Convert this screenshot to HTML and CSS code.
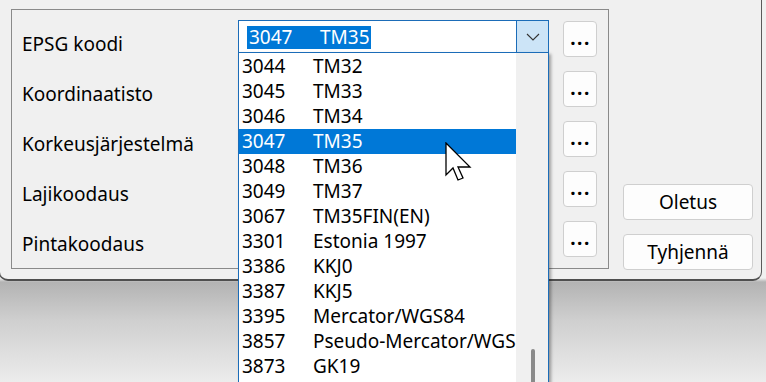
FILE: index.html
```html
<!DOCTYPE html>
<html>
<head>
<meta charset="utf-8">
<link rel="stylesheet" href="styles.css">
</head>
<body>
<div class="screen">
  <div class="window">
    <div class="group">
      <div class="row">
        <span class="label">EPSG koodi</span>
        <div class="combo open">
          <span class="value"><span class="sel"><span class="num">3047</span>TM35</span></span>
          <span class="arrow"><svg width="14" height="8" viewBox="0 0 14 8"><path d="M1 1 L7 7 L13 1" fill="none" stroke="#333" stroke-width="1.1"/></svg></span>
        </div>
        <button class="more">...</button>
      </div>
      <div class="row">
        <span class="label">Koordinaatisto</span>
        <div class="combo"></div>
        <button class="more">...</button>
      </div>
      <div class="row">
        <span class="label">Korkeusjärjestelmä</span>
        <div class="combo"></div>
        <button class="more">...</button>
      </div>
      <div class="row">
        <span class="label">Lajikoodaus</span>
        <div class="combo"></div>
        <button class="more">...</button>
      </div>
      <div class="row">
        <span class="label">Pintakoodaus</span>
        <div class="combo"></div>
        <button class="more">...</button>
      </div>
    </div>
    <div class="side">
      <button class="wide">Oletus</button>
      <button class="wide">Tyhjennä</button>
    </div>
  </div>

  <div class="dropdown">
    <ul class="items">
      <li><span class="code">3044</span><span class="name">TM32</span></li>
      <li><span class="code">3045</span><span class="name">TM33</span></li>
      <li><span class="code">3046</span><span class="name">TM34</span></li>
      <li class="active"><span class="code">3047</span><span class="name">TM35</span></li>
      <li><span class="code">3048</span><span class="name">TM36</span></li>
      <li><span class="code">3049</span><span class="name">TM37</span></li>
      <li><span class="code">3067</span><span class="name">TM35FIN(EN)</span></li>
      <li><span class="code">3301</span><span class="name">Estonia 1997</span></li>
      <li><span class="code">3386</span><span class="name">KKJ0</span></li>
      <li><span class="code">3387</span><span class="name">KKJ5</span></li>
      <li><span class="code">3395</span><span class="name">Mercator/WGS84</span></li>
      <li><span class="code">3857</span><span class="name">Pseudo-Mercator/WGS84</span></li>
      <li><span class="code">3873</span><span class="name">GK19</span></li>
    </ul>
    <div class="scrollbar"><div class="thumb"></div></div>
  </div>

  <svg class="cursor" width="27" height="40" viewBox="0 0 27 40">
    <path d="M1 1 L1 33 L8 26 L13 38 L18 36 L13 25 L25 25 Z" fill="#fff" stroke="#000" stroke-width="1.3" stroke-linejoin="miter"/>
  </svg>
</div>
</body>
</html>
```
FILE: styles.css
```css
* { box-sizing: border-box; }
html, body { margin: 0; padding: 0; }
body {
  width: 766px;
  height: 382px;
  overflow: hidden;
  font-family: "Noto Sans", "Open Sans", sans-serif;
  font-size: 19px;
  color: #000;
  background: linear-gradient(to bottom, #f0f0f0 0px, #f0f0f0 278px, #b3b3b3 282px, #cfcfcf 320px, #ececec 382px);
}
.screen {
  position: relative;
  width: 766px;
  height: 382px;
  overflow: hidden;
}
.window {
  display: flex;
  width: 763px;
  height: 281px;
  margin-left: -1px;
  padding: 9px 0 0 11px;
  background: #f0f0f0;
  border: 1px solid #5a5a5a;
  border-top: none;
  border-bottom: 2px solid #4f4f4f;
  border-radius: 0 0 9px 9px;
}
.group {
  width: 598px;
  height: 260px;
  border: 1px solid #8a8a8a;
  padding: 10px 0 0 10px;
}
.row {
  display: grid;
  grid-template-columns: 216px 311px 48px;
  height: 50px;
  align-items: start;
}
.label {
  line-height: 25px;
  margin-top: 12px;
  white-space: nowrap;
}
.combo {
  height: 33px;
  background: #fff;
  border: 1px solid #b8b8b8;
  display: flex;
}
.combo.open {
  border-color: #1b6cb8;
}
.value {
  flex: 1;
  padding: 3px 0 0 8px;
}
.sel {
  display: inline-block;
  background: #0078d7;
  color: #fff;
  line-height: 23px;
  padding: 0 1px 0 2px;
}
.sel .num {
  display: inline-block;
  width: 71px;
}
.arrow {
  width: 32px;
  background: #cce4f7;
  border-left: 1px solid #1b6cb8;
  display: flex;
  align-items: center;
  justify-content: center;
}
.more {
  margin: 1px 0 0 14px;
  height: 36px;
  width: 34px;
  padding: 0 0 2px 1px;
  font: inherit;
  font-weight: 700;
  letter-spacing: 1.5px;
  line-height: 20px;
  background: #fdfdfd;
  border: 1px solid #cfcfcf;
  border-radius: 4px;
  color: #000;
}
.side {
  display: flex;
  flex-direction: column;
  gap: 14px;
  margin-left: 14px;
  padding-top: 175px;
}
.wide {
  width: 130px;
  height: 36px;
  font: inherit;
  line-height: 22px;
  background: #fdfdfd;
  border: 1px solid #cfcfcf;
  border-radius: 4px;
  color: #000;
  padding: 0;
}
.dropdown {
  position: absolute;
  left: 238px;
  top: 52px;
  width: 311px;
  height: 340px;
  background: #fff;
  border: 1px solid #1b6cb8;
  box-shadow: 2px 2px 3px rgba(0,0,0,0.35);
  display: flex;
}
.items {
  list-style: none;
  margin: 0;
  padding: 1px 0 0 0;
  width: 277px;
}
.items li {
  height: 25px;
  line-height: 25px;
  padding-left: 3px;
  white-space: nowrap;
  overflow: hidden;
}
.items li.active {
  background: #0078d7;
  color: #fff;
}
.code {
  display: inline-block;
  width: 71px;
}
.scrollbar {
  position: relative;
  flex: 1;
  background: #f0f0f0;
}
.thumb {
  position: absolute;
  left: 15px;
  top: 296px;
  width: 4px;
  height: 60px;
  border-radius: 2px;
  background: #8a8a8a;
}
.cursor {
  position: absolute;
  left: 445px;
  top: 142px;
}
```
